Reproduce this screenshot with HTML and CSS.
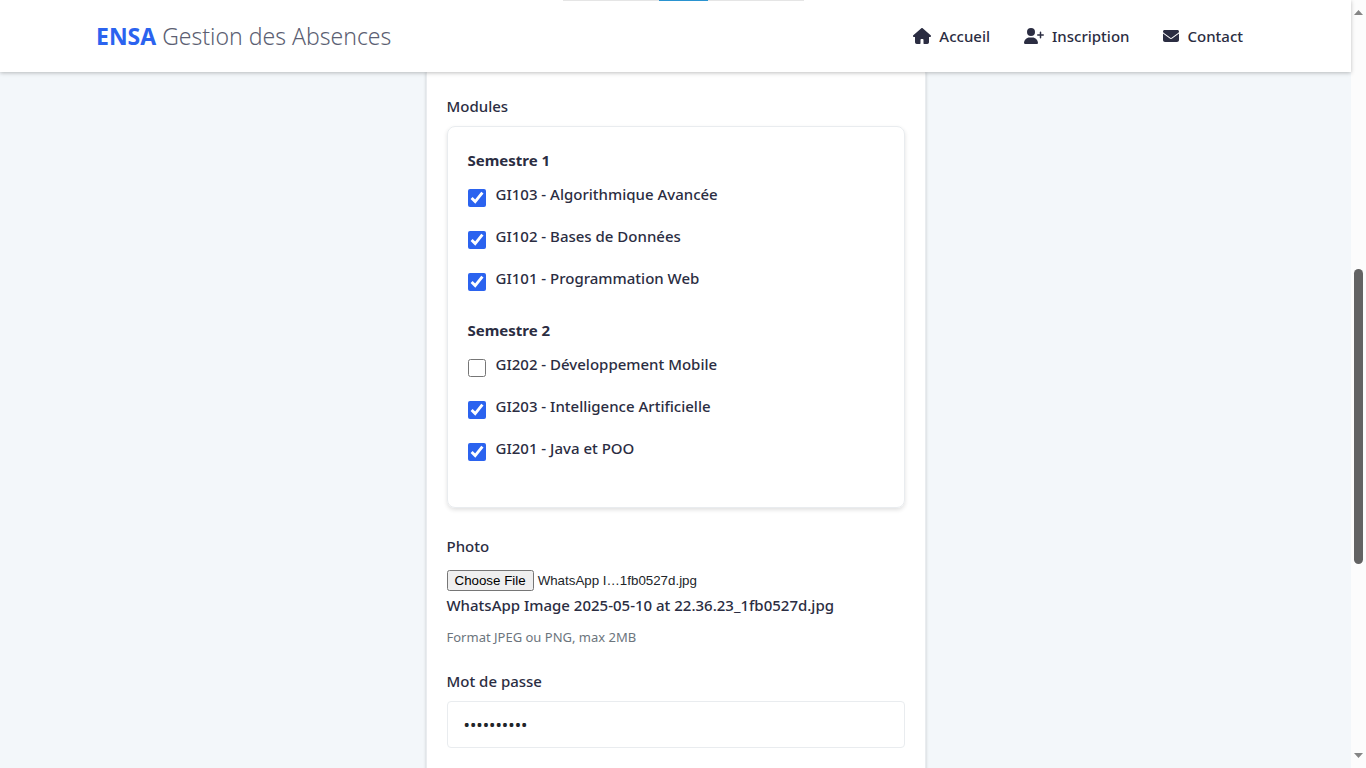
FILE: index.html
```html
<!DOCTYPE html>
<html lang="fr">
<head>
<meta charset="utf-8">
<meta name="viewport" content="width=device-width, initial-scale=1">
<title>ENSA Gestion des Absences</title>
<link rel="stylesheet" href="styles.css">
</head>
<body>
<div class="window">
  <div class="page">
    <header class="header">
      <div class="progress"><span class="progress-value"></span></div>
      <a class="brand" href="#"><strong>ENSA</strong> Gestion des Absences</a>
      <nav class="nav">
        <a href="#"><svg width="18" height="16" viewBox="0 0 576 512" aria-hidden="true"><path d="M575.8 255.5c0 18-15 32.1-32 32.1h-32l.7 160.2c0 35-24 64.2-56.500 64.2H360c-22 0-24-18-24-40v-88c0-17.700-14.300-32-32-32h-32c-17.700 0-32 14.300-32 32v88c0 22-4 40-24 40h-96c-32 0-56-28-56-64V287.600H32c-18 0-32-14-32-32.100 0-9 3-17 10-24L266.400 8c7-7 15-8 22-8s15 2 21 7l255.400 224.500c8 7 12 15 11 24z"/></svg>Accueil</a>
        <a href="#"><svg width="20" height="16" viewBox="0 0 640 512" aria-hidden="true"><path d="M96 128a128 128 0 1 1 256 0A128 128 0 1 1 96 128zM0 482.300C0 383.800 79.800 304 178.300 304h91.400C368.200 304 448 383.800 448 482.300c0 16.400-13.300 29.700-29.700 29.700H29.700C13.300 512 0 498.700 0 482.300zM504 312V248H440c-13.300 0-24-10.700-24-24s10.700-24 24-24h64V136c0-13.300 10.700-24 24-24s24 10.700 24 24v64h64c13.300 0 24 10.700 24 24s-10.700 24-24 24H552v64c0 13.300-10.700 24-24 24s-24-10.700-24-24z"/></svg>Inscription</a>
        <a href="#"><svg width="16" height="16" viewBox="0 0 512 512" aria-hidden="true"><path d="M48 64C21.500 64 0 85.500 0 112c0 15.100 7.100 29.300 19.200 38.400L236.800 313.600c11.400 8.500 27 8.500 38.400 0L492.800 150.400c12.100-9.100 19.200-23.300 19.200-38.400 0-26.500-21.500-48-48-48H48zM0 176V384c0 35.300 28.700 64 64 64H448c35.300 0 64-28.700 64-64V176L294.400 339.200c-22.800 17.100-54 17.100-76.800 0L0 176z"/></svg>Contact</a>
      </nav>
    </header>
    <main class="main">
      <form class="card">
        <div class="field" role="group" aria-labelledby="modules-label">
          <span class="label" id="modules-label">Modules</span>
          <div class="modules">
            <fieldset class="semester">
              <legend>Semestre 1</legend>
              <label class="check"><input type="checkbox" checked>GI103 - Algorithmique Avancée</label>
              <label class="check"><input type="checkbox" checked>GI102 - Bases de Données</label>
              <label class="check"><input type="checkbox" checked>GI101 - Programmation Web</label>
            </fieldset>
            <fieldset class="semester">
              <legend>Semestre 2</legend>
              <label class="check"><input type="checkbox">GI202 - Développement Mobile</label>
              <label class="check"><input type="checkbox" checked>GI203 - Intelligence Artificielle</label>
              <label class="check"><input type="checkbox" checked>GI201 - Java et POO</label>
            </fieldset>
          </div>
        </div>
        <div class="field">
          <label class="label" for="photo">Photo</label>
          <input class="file" type="file" id="photo" accept="image/jpeg,image/png">
          <label class="file-name" for="photo">WhatsApp Image 2025-05-10 at 22.36.23_1fb0527d.jpg</label>
          <small class="help">Format JPEG ou PNG, max 2MB</small>
        </div>
        <div class="field">
          <label class="label" for="password">Mot de passe</label>
          <input class="password" type="password" id="password" value="motdepasse">
        </div>
      </form>
    </main>
  </div>
  <div class="scrollbar" aria-hidden="true">
    <svg width="9" height="5" viewBox="0 0 9 5"><path d="M0 5L4.500 0L9 5z"/></svg>
    <div class="track"><div class="thumb"></div></div>
    <svg width="9" height="5" viewBox="0 0 9 5"><path d="M0 0L4.500 5L9 0z"/></svg>
  </div>
</div>
<script src="script.js"></script>
</body>
</html>
```
FILE: styles.css
```css
* {
  box-sizing: border-box;
}

body {
  margin: 0;
  font-family: "Segoe UI", "Noto Sans", "Open Sans", sans-serif;
  font-size: 15px;
  line-height: 24px;
  color: #2b2d42;
}

.window {
  display: flex;
  height: 100vh;
  overflow: hidden;
  background: #f3f7fa;
}

.page {
  flex: 1;
  min-width: 0;
  display: flex;
  flex-direction: column;
}

.header {
  position: relative;
  z-index: 1;
  flex: none;
  display: flex;
  align-items: center;
  justify-content: space-between;
  min-height: 72px;
  padding: 0 108px 0 96px;
  background: #fff;
  box-shadow: 0 1px 4px rgba(0, 0, 0, 0.25);
}

.progress {
  position: absolute;
  top: 0;
  left: 563px;
  width: 241px;
  height: 1px;
  display: flex;
  justify-content: center;
  background: #e5e5e5;
}

.progress-value {
  width: 20%;
  background: #2a93d0;
}

.brand {
  font-size: 23px;
  line-height: 32px;
  font-weight: 350;
  color: #5c5f73;
  text-decoration: none;
}

.brand strong {
  font-weight: 700;
  color: #2b63ef;
}

.nav {
  display: flex;
  gap: 34px;
}

.nav a {
  display: flex;
  align-items: center;
  gap: 8px;
  font-weight: 500;
  color: #2b2d42;
  text-decoration: none;
}

.nav svg {
  fill: #2b2d42;
}

.main {
  flex: 1;
  display: flex;
  justify-content: center;
}

.card {
  width: 100%;
  max-width: 500px;
  padding: 22px 20px 0;
  background: #fff;
  border: 1px solid #e9ecef;
  border-width: 0 1px;
  box-shadow: 0 0 3px rgba(0, 0, 0, 0.18);
}

.field {
  display: flex;
  flex-direction: column;
  margin-bottom: 24px;
}

.label {
  margin-bottom: 8px;
  font-weight: 500;
}

.modules {
  padding: 20px;
  border: 1px solid #e9ecef;
  border-radius: 8px;
  box-shadow: 0 2px 4px rgba(0, 0, 0, 0.12);
}

.semester {
  display: flex;
  flex-direction: column;
  gap: 17px;
  margin: 0 0 26px;
  padding: 0;
  border: 0;
}

.semester legend {
  margin-bottom: 9px;
  padding: 0;
  line-height: 26px;
  font-weight: 700;
}

.check {
  display: flex;
  align-items: flex-start;
  gap: 10px;
  font-weight: 500;
}

.check input {
  width: 18px;
  height: 18px;
  margin: 7px 0 0;
  accent-color: #2b63ef;
}

.file {
  width: 251px;
  margin: 4px 0 2px;
  font-family: "Liberation Sans", Arial, sans-serif;
  color: #212529;
}

.modules + .field {
  margin-top: 2px;
}

.file-name {
  font-weight: 500;
}

.help {
  margin-top: 12px;
  font-size: 13px;
  line-height: 16px;
  color: #6c757d;
}

.password {
  width: 100%;
  height: 47px;
  padding: 0 16px;
  font: inherit;
  font-size: 17px;
  color: #212529;
  background: #fff;
  border: 1px solid #e9ecef;
  border-radius: 4px;
}

.modules {
  margin-bottom: 2px;
}

.scrollbar {
  flex: none;
  width: 15px;
  display: flex;
  flex-direction: column;
  align-items: center;
  padding: 10px 0;
  background: #fcfcfc;
}

.scrollbar svg {
  flex: none;
  fill: #858585;
}

.track {
  flex: 1;
  width: 9px;
  padding-top: 254px;
}

.thumb {
  height: 61%;
  border-radius: 5px;
  background: #636363;
}
```
FILE: script.js
```js
const transfer = new DataTransfer();
transfer.items.add(new File([""], "WhatsApp Image 2025-05-10 at 22.36.23_1fb0527d.jpg", { type: "image/jpeg" }));
document.getElementById("photo").files = transfer.files;
```
